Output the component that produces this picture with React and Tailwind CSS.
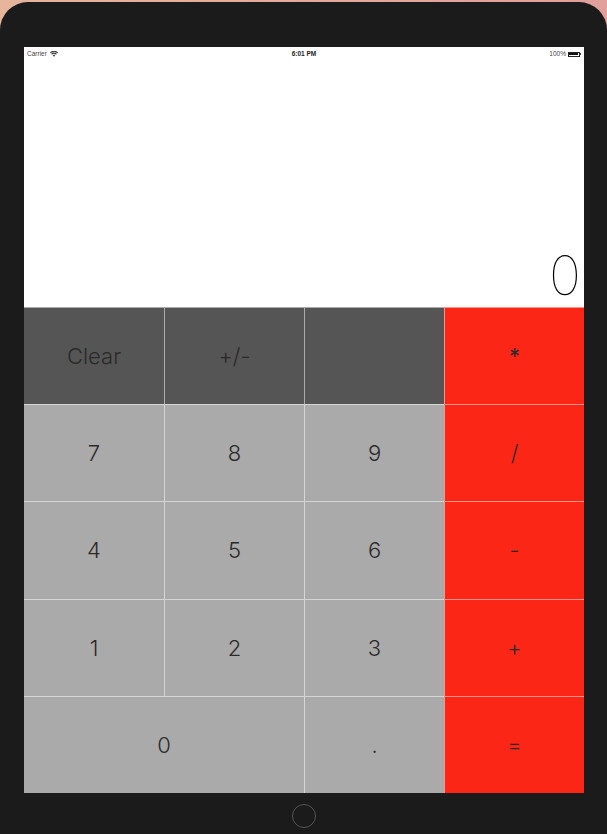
import React from "react";

const font = { fontFamily: "Inter, 'Helvetica Neue', 'Liberation Sans', sans-serif" };

function Cell({ label, bg, first, span, textClass = "" }) {
  return (
    <div
      className={`flex items-center justify-center border-t border-white/50 ${first ? "" : "border-l"} ${span ? "col-span-2" : ""} ${bg}`}
    >
      <span className={`text-[22px] font-light text-[#2a2a2a] leading-none ${textClass}`}>{label}</span>
    </div>
  );
}

export default function App() {
  const dark = "bg-[#555555]";
  const light = "bg-[#aaaaaa]";
  const red = "bg-[#fc2616]";
  return (
    <div
      className="w-[607px] h-[834px] overflow-hidden bg-gradient-to-r from-[#e6b59c] to-[#e0a09b]"
      style={font}
    >
      <div className="mt-[2px] h-[832px] rounded-t-[28px] bg-[#1b1b1b] pt-[45px] pl-[24px] flex flex-col">
        <div className="w-[560px] h-[746px] flex flex-col bg-white">
          {/* status bar */}
          <div className="h-[14px] flex items-center justify-between px-[3px] text-[6.5px] leading-none">
            <div className="flex items-center gap-[3px] w-[80px] text-[#444]" style={{ fontFamily: "'Liberation Sans', sans-serif" }}>
              <span>Carrier</span>
              <svg width="8" height="6" viewBox="0 0 16 12">
                <path d="M8 11.5 L10.5 8.5 A4 4 0 0 0 5.5 8.5 Z" fill="#333" />
                <path d="M2.5 5.5 A8 8 0 0 1 13.5 5.5 L12 7.3 A5.6 5.6 0 0 0 4 7.3 Z" fill="#333" />
                <path d="M0 2.8 A11.5 11.5 0 0 1 16 2.8 L14.6 4.4 A9.6 9.6 0 0 0 1.4 4.4 Z" fill="#333" />
              </svg>
            </div>
            <span className="font-bold text-[#222]" style={{ fontFamily: "'Liberation Sans', sans-serif" }}>6:01 PM</span>
            <div className="flex items-center justify-end gap-[2px] w-[80px] text-[#444]" style={{ fontFamily: "'Liberation Sans', sans-serif" }}>
              <span>100%</span>
              <div className="flex items-center">
                <div className="w-[12px] h-[5px] border border-[#222] p-[0.5px]">
                  <div className="w-full h-full bg-[#111]" />
                </div>
                <div className="w-[1px] h-[2px] bg-[#444]" />
              </div>
            </div>
          </div>
          {/* display */}
          <div className="h-[246px] flex items-end justify-end pr-[3px] pb-[4px]">
            <span className="text-[54px] font-thin leading-none text-black">0</span>
          </div>
          {/* keypad */}
          <div className="h-[486px] grid grid-cols-4 grid-rows-5">
            <Cell label="Clear" bg={dark} first />
            <Cell label="+/-" bg={dark} />
            <Cell label="" bg={dark} />
            <Cell label="*" bg={red} textClass="text-[12px] font-normal" />

            <Cell label="7" bg={light} first />
            <Cell label="8" bg={light} />
            <Cell label="9" bg={light} />
            <Cell label="/" bg={red} />

            <Cell label="4" bg={light} first />
            <Cell label="5" bg={light} />
            <Cell label="6" bg={light} />
            <Cell label="-" bg={red} />

            <Cell label="1" bg={light} first />
            <Cell label="2" bg={light} />
            <Cell label="3" bg={light} />
            <Cell label="+" bg={red} />

            <Cell label="0" bg={light} first span />
            <Cell label="." bg={light} />
            <Cell label="=" bg={red} />
          </div>
        </div>
        <div className="w-[560px] flex justify-center pt-[11px]">
          <div className="w-[24px] h-[24px] rounded-full border-[1.5px] border-[#555]" />
        </div>
      </div>
    </div>
  );
}
